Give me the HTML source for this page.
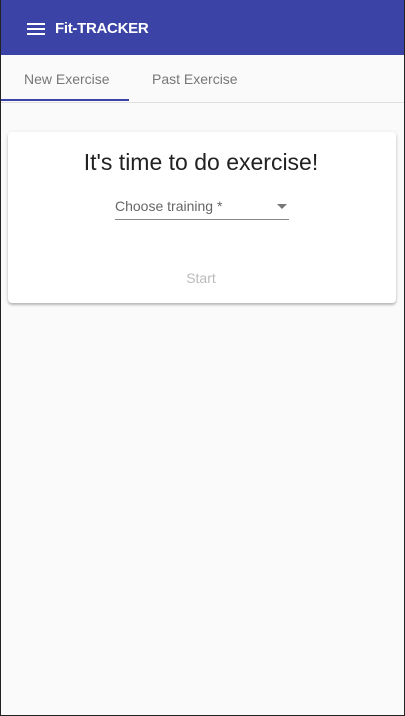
<!DOCTYPE html>
<html><head><style>
*{margin:0;padding:0;box-sizing:border-box}
html,body{width:405px;height:716px;overflow:hidden}
body{background:#fafafa;font-family:"Liberation Sans",Roboto,sans-serif;position:relative}
.frame{position:absolute;left:0;top:0;width:405px;height:716px;border:1px solid #222;border-top:none;pointer-events:none}
.bar{position:absolute;left:0;top:0;width:404px;height:55px;background:#3c43a6;color:#fff}
.ham{position:absolute;left:27px;top:23px;width:18px}
.ham i{display:block;height:2px;background:#fff;margin-bottom:3px}
.title{position:absolute;left:55px;top:20px;font-size:15px;font-weight:bold;letter-spacing:-0.3px}
.tabs{position:absolute;left:0;top:55px;width:404px;height:48px;border-bottom:1px solid #e0e0e0}
.tab{position:absolute;top:16px;font-size:14px;color:#777}
.ind{position:absolute;left:0;top:44px;width:129px;height:2px;background:#3c43a6}
.card{position:absolute;left:8px;top:132px;width:388px;height:171px;background:#fff;border-radius:4px;box-shadow:0 2px 2px rgba(0,0,0,.2),0 1px 4px rgba(0,0,0,.12)}
h1{position:absolute;left:-1px;width:100%;top:17px;text-align:center;font-weight:normal;font-size:23px;color:#222}
.sel{position:absolute;left:107px;top:66px;width:174px;height:22px;border-bottom:1px solid #888;font-size:14px;color:#666}
.arrow{position:absolute;right:2px;top:6px;width:0;height:0;border-left:5px solid transparent;border-right:5px solid transparent;border-top:5px solid #777}
.start{position:absolute;left:-1px;width:100%;top:138px;text-align:center;font-size:14px;color:#bbb}
</style></head><body>
<div class="bar"><div class="ham"><i></i><i></i><i></i></div><div class="title">Fit-TRACKER</div></div>
<div class="tabs"><div class="tab" style="left:24px">New Exercise</div><div class="tab" style="left:152px">Past Exercise</div><div class="ind"></div></div>
<div class="card"><h1>It's time to do exercise!</h1>
<div class="sel">Choose training *<div class="arrow"></div></div>
<div class="start">Start</div></div>
<div class="frame"></div>
</body></html>
